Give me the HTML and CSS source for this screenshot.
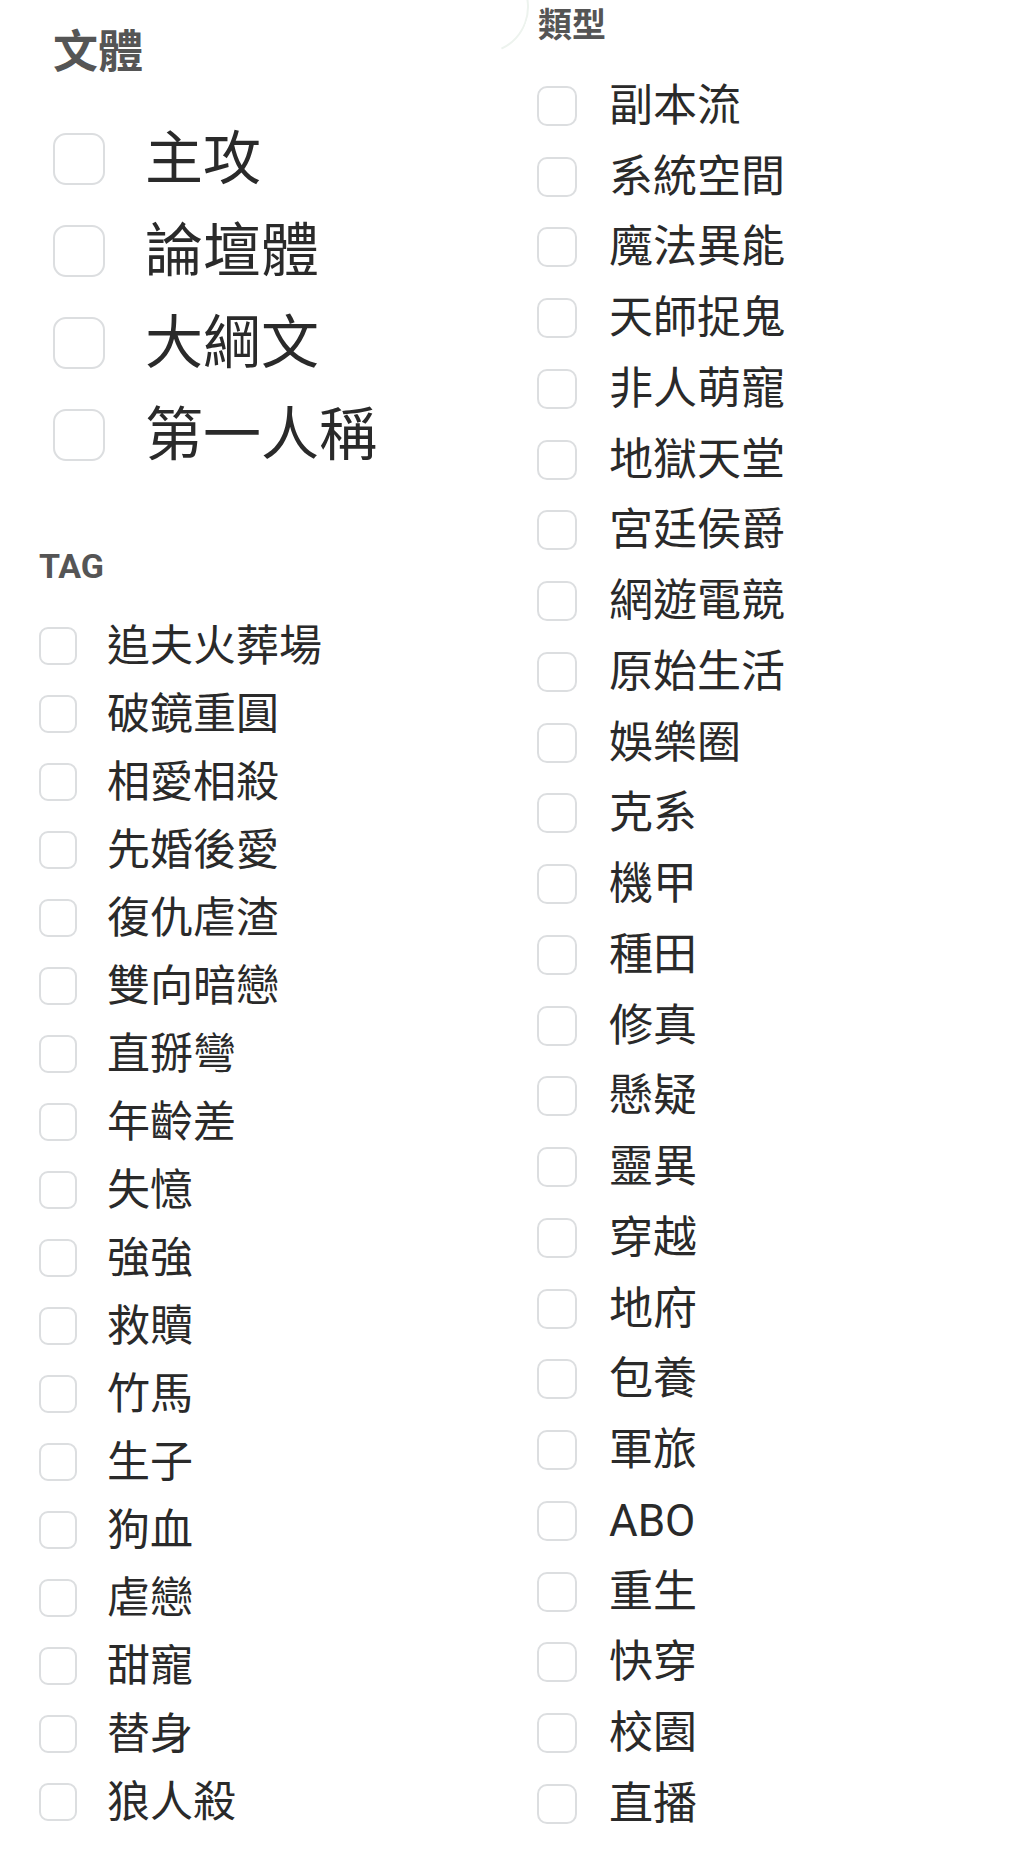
FILE: index.html
```html
<!DOCTYPE html>
<html lang="zh-Hant">
<head>
  <meta charset="UTF-8" />
  <title>篩選</title>
  <link rel="stylesheet" href="styles.css">
</head>
<body>
  <div class="filtros">
    <div class="col-izq">
      <section class="grupo grupo-estilo">
        <h2>文體</h2>
        <label class="opcion"><input type="checkbox" /><span>主攻</span></label>
        <label class="opcion"><input type="checkbox" /><span>論壇體</span></label>
        <label class="opcion"><input type="checkbox" /><span>大綱文</span></label>
        <label class="opcion"><input type="checkbox" /><span>第一人稱</span></label>
      </section>

      <section class="grupo grupo-tag">
        <h2>TAG</h2>
        <label class="opcion"><input type="checkbox" /><span>追夫火葬場</span></label>
        <label class="opcion"><input type="checkbox" /><span>破鏡重圓</span></label>
        <label class="opcion"><input type="checkbox" /><span>相愛相殺</span></label>
        <label class="opcion"><input type="checkbox" /><span>先婚後愛</span></label>
        <label class="opcion"><input type="checkbox" /><span>復仇虐渣</span></label>
        <label class="opcion"><input type="checkbox" /><span>雙向暗戀</span></label>
        <label class="opcion"><input type="checkbox" /><span>直掰彎</span></label>
        <label class="opcion"><input type="checkbox" /><span>年齡差</span></label>
        <label class="opcion"><input type="checkbox" /><span>失憶</span></label>
        <label class="opcion"><input type="checkbox" /><span>強強</span></label>
        <label class="opcion"><input type="checkbox" /><span>救贖</span></label>
        <label class="opcion"><input type="checkbox" /><span>竹馬</span></label>
        <label class="opcion"><input type="checkbox" /><span>生子</span></label>
        <label class="opcion"><input type="checkbox" /><span>狗血</span></label>
        <label class="opcion"><input type="checkbox" /><span>虐戀</span></label>
        <label class="opcion"><input type="checkbox" /><span>甜寵</span></label>
        <label class="opcion"><input type="checkbox" /><span>替身</span></label>
        <label class="opcion"><input type="checkbox" /><span>狼人殺</span></label>
      </section>
    </div>

    <div class="col-der">
      <span class="arco"></span>
      <section class="grupo grupo-tipo">
        <h2>類型</h2>
        <label class="opcion"><input type="checkbox" /><span>副本流</span></label>
        <label class="opcion"><input type="checkbox" /><span>系統空間</span></label>
        <label class="opcion"><input type="checkbox" /><span>魔法異能</span></label>
        <label class="opcion"><input type="checkbox" /><span>天師捉鬼</span></label>
        <label class="opcion"><input type="checkbox" /><span>非人萌寵</span></label>
        <label class="opcion"><input type="checkbox" /><span>地獄天堂</span></label>
        <label class="opcion"><input type="checkbox" /><span>宮廷侯爵</span></label>
        <label class="opcion"><input type="checkbox" /><span>網遊電競</span></label>
        <label class="opcion"><input type="checkbox" /><span>原始生活</span></label>
        <label class="opcion"><input type="checkbox" /><span>娛樂圈</span></label>
        <label class="opcion"><input type="checkbox" /><span>克系</span></label>
        <label class="opcion"><input type="checkbox" /><span>機甲</span></label>
        <label class="opcion"><input type="checkbox" /><span>種田</span></label>
        <label class="opcion"><input type="checkbox" /><span>修真</span></label>
        <label class="opcion"><input type="checkbox" /><span>懸疑</span></label>
        <label class="opcion"><input type="checkbox" /><span>靈異</span></label>
        <label class="opcion"><input type="checkbox" /><span>穿越</span></label>
        <label class="opcion"><input type="checkbox" /><span>地府</span></label>
        <label class="opcion"><input type="checkbox" /><span>包養</span></label>
        <label class="opcion"><input type="checkbox" /><span>軍旅</span></label>
        <label class="opcion"><input type="checkbox" /><span>ABO</span></label>
        <label class="opcion"><input type="checkbox" /><span>重生</span></label>
        <label class="opcion"><input type="checkbox" /><span>快穿</span></label>
        <label class="opcion"><input type="checkbox" /><span>校園</span></label>
        <label class="opcion"><input type="checkbox" /><span>直播</span></label>
      </section>
    </div>
  </div>
</body>
</html>
```

FILE: styles.css
```css
body {
  margin: 0;
  background: #ffffff;
  font-family: Roboto, "Noto Sans CJK TC", sans-serif;
  color: #2a2a2a;
}

.filtros {
  display: grid;
  grid-template-columns: 537px 1fr;
  height: 1867px;
  overflow: hidden;
}

.col-der {
  position: relative;
}

/* borde tenue que asoma arriba */
.arco {
  position: absolute;
  top: -40px;
  left: -102px;
  width: 90px;
  height: 90px;
  border: 2px solid transparent;
  border-right-color: #edf3ee;
  border-radius: 50%;
  transform: rotate(20deg);
}

.grupo h2 {
  margin: 0;
  line-height: 1;
  font-weight: bold;
  color: #555555;
}

.opcion {
  display: flex;
  align-items: center;
}

.opcion span {
  line-height: 1;
}

.opcion input {
  appearance: none;
  -webkit-appearance: none;
  margin: 0;
  flex-shrink: 0;
  background: #ffffff;
  border: 2px solid #dcdee0;
}

/* 文體 */
.grupo-estilo {
  padding: 30px 0 0 53px;
}
.grupo-estilo h2 {
  font-size: 45px;
  margin-bottom: 38px;
}
.grupo-estilo .opcion {
  height: 92px;
}
.grupo-estilo input {
  width: 52px;
  height: 52px;
  border-radius: 13px;
  margin-right: 40px;
}
.grupo-estilo span {
  font-size: 58px;
}

/* TAG */
.grupo-tag {
  padding: 68px 0 0 39px;
}
.grupo-tag h2 {
  font-size: 34px;
  margin-bottom: 29px;
}
.grupo-tag .opcion {
  height: 68px;
}
.grupo-tag input {
  width: 38px;
  height: 38px;
  border-radius: 9px;
  margin-right: 30px;
}
.grupo-tag span {
  font-size: 43px;
}

/* 類型 */
.grupo-tipo {
  padding: 8px 0 0 0;
}
.grupo-tipo h2 {
  font-size: 34px;
  margin-bottom: 28.6px;
  padding-left: 1px;
}
.grupo-tipo .opcion {
  height: 70.75px;
}
.grupo-tipo input {
  width: 40px;
  height: 40px;
  border-radius: 10px;
  margin-right: 32px;
}
.grupo-tipo span {
  font-size: 44px;
}
```
